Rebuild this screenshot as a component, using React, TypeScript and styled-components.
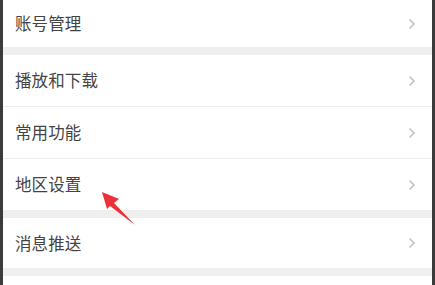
import React from "react";
import styled, { createGlobalStyle } from "styled-components";

const Global = createGlobalStyle`
  html, body { margin: 0; padding: 0; background: #3b3b3b; }
  body { font-family: "Noto Sans CJK SC", "Noto Sans", sans-serif; }
`;

const Frame = styled.div`
  position: relative;
  margin: 0 3px;
  width: 429px;
  height: 285px;
  background: #efefef;
  display: flex;
  flex-direction: column;
  gap: 8px;
  overflow: hidden;
`;

const Group = styled.div`
  background: #ffffff;
  display: flex;
  flex-direction: column;
`;

const Row = styled.div<{ $h?: number; $divider?: boolean }>`
  height: ${(p) => p.$h ?? 50}px;
  display: flex;
  align-items: center;
  justify-content: space-between;
  padding: 0 16px 0 12px;
  border-top: ${(p) => (p.$divider ? "1px solid #f0f0f0" : "none")};
`;

const Label = styled.span`
  font-size: 16.5px;
  color: #444444;
  letter-spacing: 0.1px;
  line-height: 1;
`;

const Chevron = () => (
  <svg width="8" height="12" viewBox="0 0 8 12">
    <path d="M1.5 1.5 L6 6 L1.5 10.5" fill="none" stroke="#c4c4c4" strokeWidth="1.7" />
  </svg>
);

const Arrow = styled.svg`
  position: absolute;
  left: 94px;
  top: 188px;
`;

const Filler = styled.div`
  background: #ffffff;
  flex: 1;
`;

export default function App() {
  return (
    <>
      <Global />
      <Frame>
        <Group>
          <Row $h={47}>
            <Label>账号管理</Label>
            <Chevron />
          </Row>
        </Group>
        <Group>
          <Row $h={51}>
            <Label>播放和下载</Label>
            <Chevron />
          </Row>
          <Row $h={51} $divider>
            <Label>常用功能</Label>
            <Chevron />
          </Row>
          <Row $h={51} $divider>
            <Label>地区设置</Label>
            <Chevron />
          </Row>
        </Group>
        <Group>
          <Row $h={50}>
            <Label>消息推送</Label>
            <Chevron />
          </Row>
        </Group>
        <Filler />
        <Arrow width="42" height="42" viewBox="94 188 42 42">
          <polygon
            points="99,192 116,199 111,203 132,225 107,206 104,209"
            fill="#ea3237"
          />
        </Arrow>
      </Frame>
    </>
  );
}
